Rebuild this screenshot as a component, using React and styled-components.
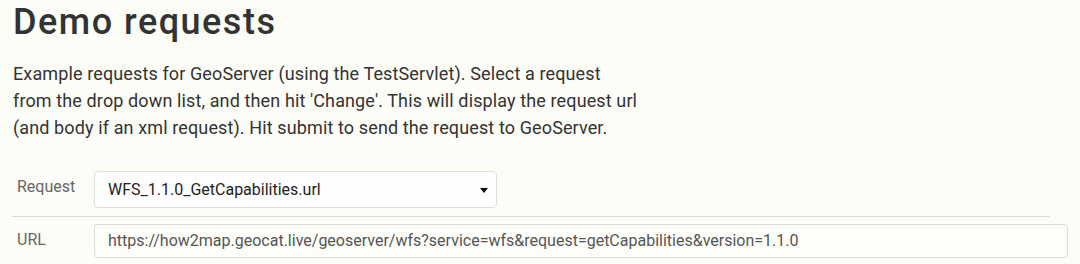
import React from "react";
import styled, { createGlobalStyle } from "styled-components";

const GlobalStyle = createGlobalStyle`
  body {
    margin: 0;
    background: #fcfdf7;
    font-family: Roboto, "Liberation Sans", sans-serif;
    color: #333;
  }
`;

const Page = styled.div`
  padding: 3px 12px 0 13px;
`;

const Title = styled.h1`
  margin: 0;
  font-size: 36px;
  font-weight: 500;
  line-height: 1.1;
  letter-spacing: 1.5px;
  color: #333;
`;

const Intro = styled.p`
  margin: 17px 0 0;
  font-size: 18px;
  line-height: 27px;
  letter-spacing: 0.12px;
  color: #333;
`;

const Form = styled.div`
  margin-top: 30px;
  margin-left: -1px;
`;

const Row = styled.div`
  display: flex;
  align-items: flex-start;
  padding: ${(p) => (p.$divider ? "0 0 8px" : "7px 0 0")};
  margin-right: ${(p) => (p.$divider ? "18px" : "0")};
  border-bottom: ${(p) => (p.$divider ? "1px solid #dcdcd6" : "none")};
`;

const Label = styled.label`
  flex: 0 0 82px;
  box-sizing: border-box;
  padding: 6px 0 0 5px;
  font-size: 16px;
  line-height: 1.2;
  color: #666;
`;

const SelectBox = styled.div`
  box-sizing: border-box;
  width: 403px;
  height: 37px;
  display: flex;
  align-items: center;
  justify-content: space-between;
  padding: 0 8px 0 13px;
  background: #fefefe;
  border: 1px solid #e0e0da;
  border-radius: 4px;
  font-size: 16px;
  color: #222;
`;

const Caret = styled.span`
  width: 0;
  height: 0;
  margin-top: 2px;
  border-left: 4.5px solid transparent;
  border-right: 4.5px solid transparent;
  border-top: 5px solid #111;
`;

const UrlInput = styled.input`
  flex: 1;
  box-sizing: border-box;
  height: 34px;
  padding: 0 13px;
  background: #fdfefa;
  border: 1px solid #dcdcd6;
  border-radius: 4px;
  font-family: inherit;
  font-size: 16px;
  color: #555;
  outline: none;
`;

const App = () => {
  return (
    <Page>
      <GlobalStyle />
      <Title>Demo requests</Title>
      <Intro>
        Example requests for GeoServer (using the TestServlet). Select a request
        <br />
        from the drop down list, and then hit 'Change'. This will display the
        request url
        <br />
        (and body if an xml request). Hit submit to send the request to
        GeoServer.
      </Intro>
      <Form>
        <Row $divider>
          <Label>Request</Label>
          <SelectBox>
            <span>WFS_1.1.0_GetCapabilities.url</span>
            <Caret />
          </SelectBox>
        </Row>
        <Row>
          <Label>URL</Label>
          <UrlInput
            readOnly
            value="https://how2map.geocat.live/geoserver/wfs?service=wfs&request=getCapabilities&version=1.1.0"
          />
        </Row>
      </Form>
    </Page>
  );
};

export default App;
